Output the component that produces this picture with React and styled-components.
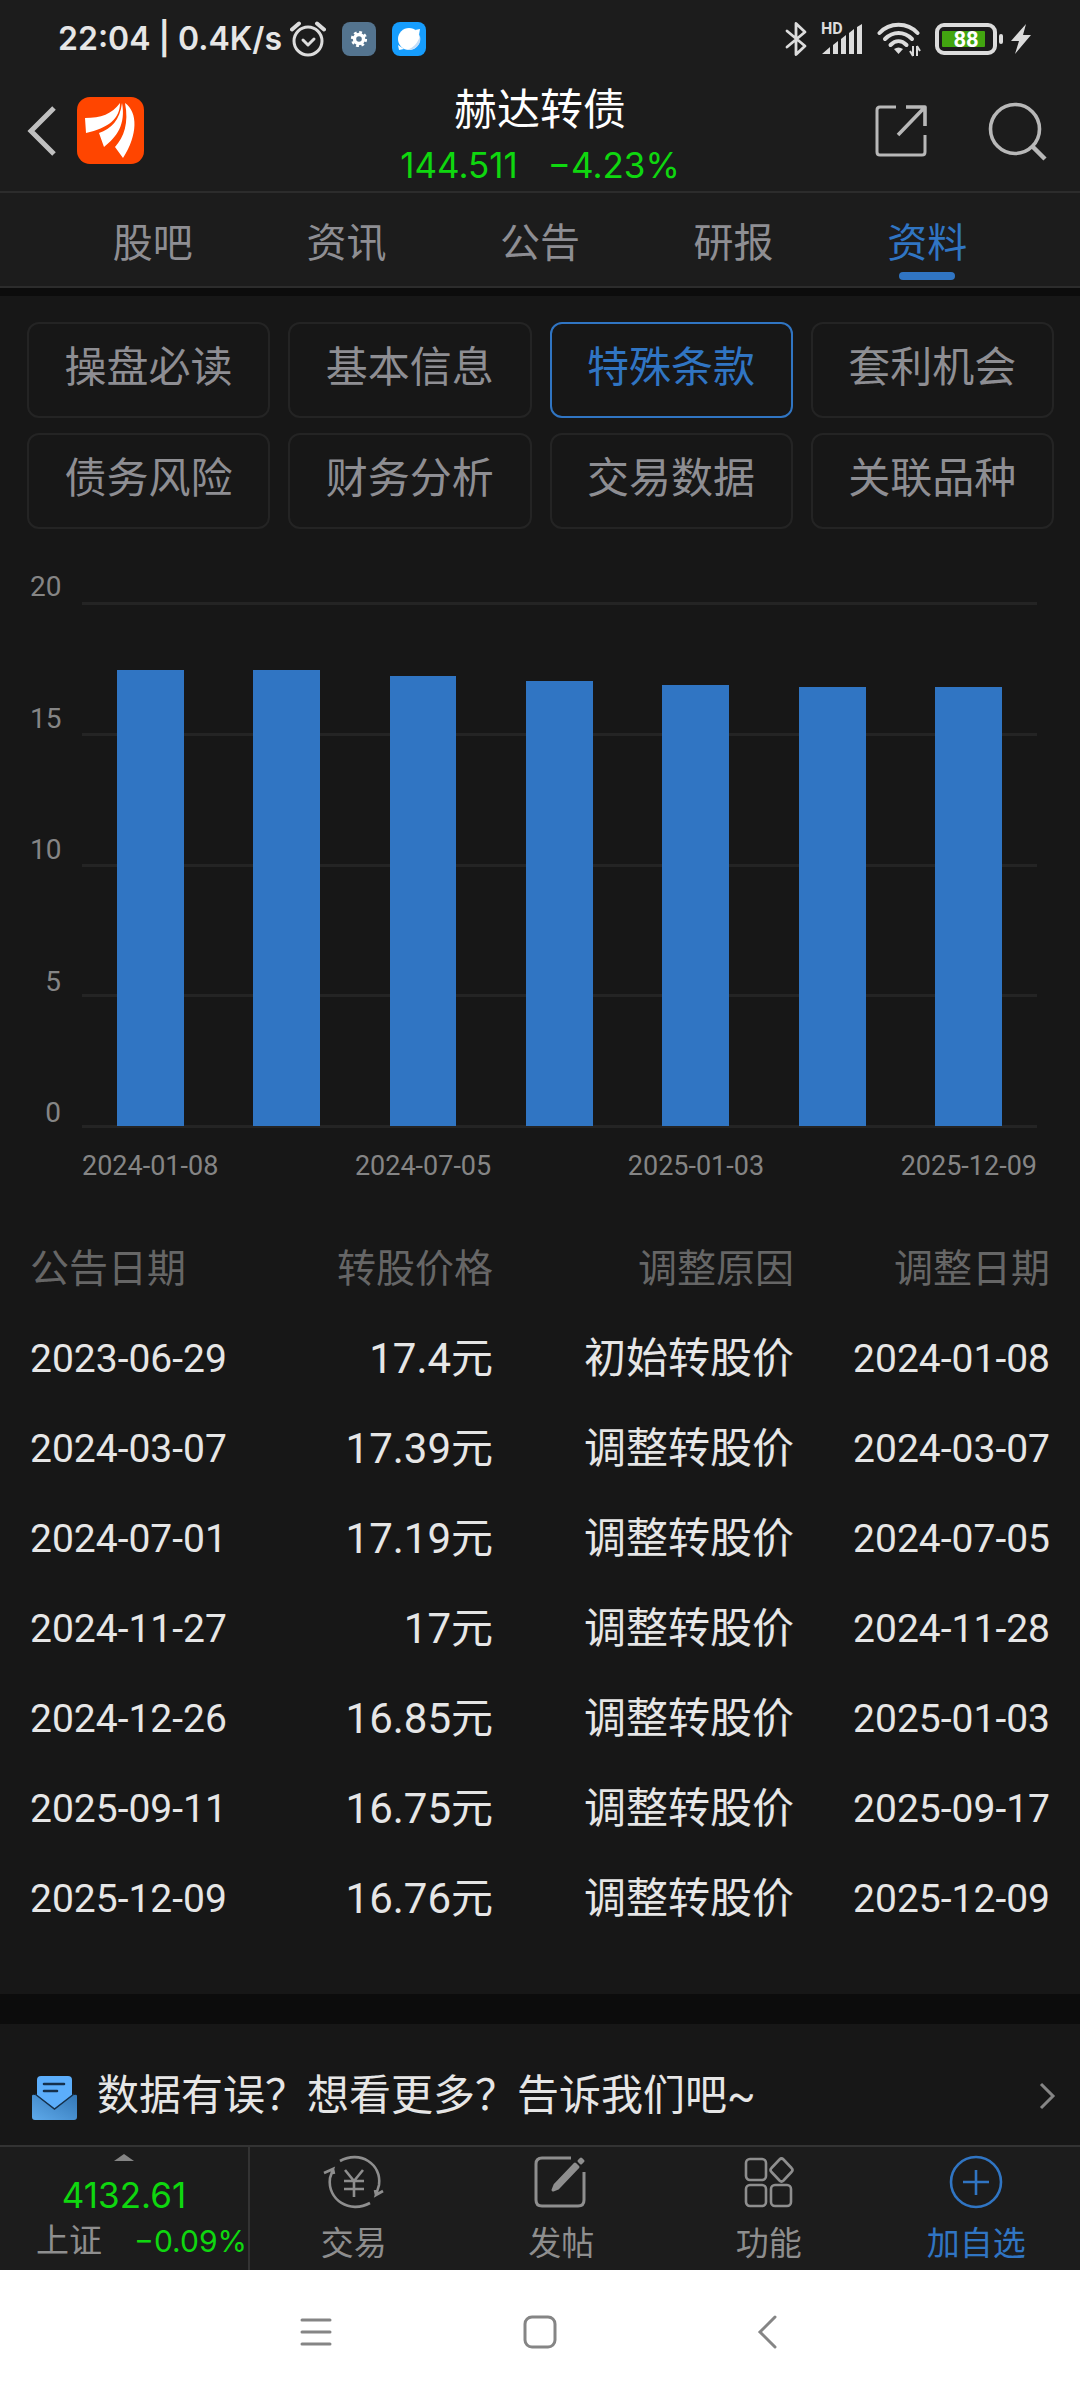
import React from "react";
import styled, { createGlobalStyle } from "styled-components";

const GlobalStyle = createGlobalStyle`
  * {
    box-sizing: border-box;
  }
  body {
    margin: 0;
    background: #171717;
    font-family: Roboto, "Noto Sans CJK SC", sans-serif;
  }
  button {
    margin: 0;
    padding: 0;
    border: 0;
    background: none;
    font-family: inherit;
    cursor: pointer;
  }
  svg {
    display: block;
    flex: none;
  }
`;

const BLUE = "#3075c3";
const GREEN = "#0fd70f";

const tabs = ["股吧", "资讯", "公告", "研报", "资料"];

const sections = [
  "操盘必读",
  "基本信息",
  "特殊条款",
  "套利机会",
  "债务风险",
  "财务分析",
  "交易数据",
  "关联品种"
];

const records = [
  { notice: "2023-06-29", price: 17.4, reason: "初始转股价", date: "2024-01-08" },
  { notice: "2024-03-07", price: 17.39, reason: "调整转股价", date: "2024-03-07" },
  { notice: "2024-07-01", price: 17.19, reason: "调整转股价", date: "2024-07-05" },
  { notice: "2024-11-27", price: 17, reason: "调整转股价", date: "2024-11-28" },
  { notice: "2024-12-26", price: 16.85, reason: "调整转股价", date: "2025-01-03" },
  { notice: "2025-09-11", price: 16.75, reason: "调整转股价", date: "2025-09-17" },
  { notice: "2025-12-09", price: 16.76, reason: "调整转股价", date: "2025-12-09" }
];

const ticks = [20, 15, 10, 5, 0];
const maxPrice = 20;

const StatusBar = styled.div`
  display: flex;
  align-items: center;
  justify-content: space-between;
  height: 78px;
  padding: 0 49px 0 58px;
  background: #1c1c1c;
  color: #e6e6e6;
`;
const StatusGroup = styled.div`
  display: flex;
  align-items: center;
  gap: ${props => props.$gap}px;
`;
const StatusText = styled.span`
  font-family: Inter, sans-serif;
  font-size: 32px;
  font-weight: 600;
  line-height: 40px;
  white-space: nowrap;
`;
const Header = styled.header`
  display: grid;
  grid-template-columns: 1fr auto 1fr;
  align-items: center;
  height: 115px;
  padding: 0 26px;
  border-bottom: 2px solid #2c2c2c;
  background: #1c1c1c;
`;
const HeaderSide = styled.div`
  display: flex;
  align-items: center;
  justify-content: ${props => (props.$end ? "flex-end" : "flex-start")};
  gap: ${props => (props.$end ? 60 : 20)}px;
  padding: ${props => (props.$end ? "0 7px 8px 0" : "0 0 8px")};
`;
const Quote = styled.div`
  text-align: center;
`;
const Title = styled.h1`
  margin: 0;
  color: #ffffff;
  font-size: 43px;
  font-weight: 400;
  line-height: 60px;
`;
const Price = styled.div`
  display: flex;
  justify-content: center;
  gap: 30px;
  color: ${GREEN};
  font-family: Inter, sans-serif;
  font-size: 35px;
  line-height: 50px;
`;
const Tabs = styled.nav`
  display: flex;
  height: 95px;
  padding: 0 56px;
  border-bottom: 2px solid #2c2c2c;
  background: #1c1c1c;
`;
const Tab = styled.button`
  flex: 1;
  display: flex;
  flex-direction: column;
  align-items: center;
  justify-content: flex-end;
  gap: 4px;
  padding-bottom: 6px;
  color: ${props => (props.$active ? BLUE : "#8e8e93")};
  font-size: 40px;
  line-height: 48px;
  &::after {
    content: "";
    width: 56px;
    height: 8px;
    border-radius: 4px;
    background: ${props => (props.$active ? BLUE : "transparent")};
  }
`;
const Divider = styled.div`
  height: ${props => props.$size}px;
  background: #0c0c0c;
`;
const SectionGrid = styled.div`
  display: grid;
  grid-template-columns: repeat(4, 1fr);
  gap: 15px 18px;
  padding: 26px 26px 0 27px;
`;
const SectionButton = styled.button`
  height: 96px;
  padding-bottom: 4px;
  border: 2px solid ${props => (props.$active ? BLUE : "#242424")};
  border-radius: 12px;
  color: ${props => (props.$active ? BLUE : "#8e8e93")};
  font-size: 42px;
  line-height: 60px;
`;
const Chart = styled.div`
  display: grid;
  grid-template-columns: 31px 1fr;
  column-gap: 21px;
  padding: 43px 43px 0 30px;
  color: #858585;
`;
const YAxis = styled.div`
  display: flex;
  flex-direction: column;
  justify-content: space-between;
  font-size: 28px;
  text-align: right;
  line-height: 30px;
`;
const Plot = styled.div`
  display: grid;
  height: 526px;
  margin-top: 30px;
`;
const GridLines = styled.div`
  grid-area: 1 / 1;
  display: flex;
  flex-direction: column;
  justify-content: space-between;
`;
const GridLine = styled.div`
  height: 3px;
  background: #242424;
`;
const Bars = styled.div`
  grid-area: 1 / 1;
  z-index: 1;
  display: flex;
  align-items: flex-end;
  justify-content: space-around;
  padding-bottom: 2px;
`;
const Bar = styled.div`
  width: 7%;
  background: ${BLUE};
`;
const XAxis = styled.div`
  grid-column: 2;
  display: flex;
  justify-content: space-between;
  margin-top: 22px;
  font-size: 27px;
  line-height: 32px;
`;
const TableWrap = styled.div`
  padding: 39px 30px 50px;
`;
const Table = styled.table`
  width: 100%;
  table-layout: fixed;
  border-collapse: collapse;
`;
const Th = styled.th`
  width: ${props => props.$width};
  height: 93px;
  padding: 0 0 6px;
  color: #666666;
  font-size: 39px;
  font-weight: 400;
  text-align: right;
  &:first-child {
    text-align: left;
  }
`;
const Td = styled.td`
  height: 90px;
  padding: 0;
  color: #e6e6e6;
  font-size: ${props => (props.$date ? 39 : 42)}px;
  line-height: 60px;
  text-align: right;
  white-space: nowrap;
  &:first-child {
    text-align: left;
  }
`;
const Feedback = styled.a`
  display: flex;
  align-items: center;
  height: 121px;
  padding: 22px 24px 0 32px;
  color: #e6e6e6;
  font-size: 42px;
  line-height: 60px;
  text-decoration: none;
`;
const FeedbackText = styled.span`
  flex: 1;
  margin-left: 20px;
`;
const BottomBar = styled.footer`
  display: flex;
  height: 125px;
  border-top: 2px solid #333333;
  background: #1c1c1c;
`;
const IndexPanel = styled.button`
  display: flex;
  flex-direction: column;
  align-items: center;
  width: 250px;
  padding-top: 7px;
  border-right: 2px solid #333333;
`;
const IndexValue = styled.span`
  margin-top: 10px;
  color: ${GREEN};
  font-family: Inter, sans-serif;
  font-size: 35px;
  line-height: 48px;
`;
const IndexRow = styled.span`
  align-self: stretch;
  display: flex;
  align-items: center;
  justify-content: space-between;
  padding: 0 1px 0 36px;
  color: #8e8e8e;
  font-size: 33px;
  line-height: 44px;
`;
const IndexChange = styled.span`
  color: ${GREEN};
  font-family: Inter, sans-serif;
  font-size: 30px;
`;
const Actions = styled.nav`
  flex: 1;
  display: flex;
`;
const Action = styled.button`
  flex: 1;
  display: flex;
  flex-direction: column;
  align-items: center;
  gap: 12px;
  padding-top: 7px;
  color: ${props => (props.$active ? BLUE : "#8e8e8e")};
  font-size: 33px;
  line-height: 44px;
`;
const SystemNav = styled.nav`
  display: flex;
  align-items: center;
  justify-content: center;
  gap: 190px;
  height: 130px;
  padding-bottom: 6px;
  background: #ffffff;
`;

const AlarmIcon = () => (
  <svg width="36" height="36" viewBox="0 0 36 36" fill="none" stroke="#dcdcdc" strokeWidth="3" strokeLinecap="round">
    <circle cx="18" cy="20" r="14" />
    <path d="M2 8.500l7-6M34 8.500l-7-6" strokeWidth="4" />
    <path d="M13 19l5 5 6-6" strokeLinejoin="round" />
  </svg>
);
const GearIcon = () => (
  <svg width="34" height="34" viewBox="0 0 34 34">
    <rect width="34" height="34" rx="8" fill="#54748f" />
    <circle cx="17" cy="17" r="4.500" fill="none" stroke="#fff" strokeWidth="3.400" />
    <circle cx="17" cy="17" r="6.800" fill="none" stroke="#fff" strokeWidth="2.600" strokeDasharray="2.800 2.540" />
  </svg>
);
const BrowserIcon = () => (
  <svg width="34" height="34" viewBox="0 0 34 34">
    <rect width="34" height="34" rx="8" fill="#169dfd" />
    <circle cx="17" cy="17" r="11" fill="#fff" />
    <path d="M23 8l5-1-1 6zM6 23l1 5 5-1z" fill="#fff" />
    <path d="M28 14c2 8-4 14-13 14 6-2 11-7 13-14z" fill="#c3ddf8" />
  </svg>
);
const BluetoothIcon = () => (
  <svg width="22" height="36" viewBox="0 0 22 36" fill="none" stroke="#dcdcdc" strokeWidth="2.800" strokeLinejoin="round" strokeLinecap="round">
    <path d="M2 10l18 15-9 8.500v-31L20 11 2 26" />
  </svg>
);
const SignalIcon = () => (
  <svg width="42" height="50" viewBox="0 -8 42 50" fill="#dcdcdc">
    <text x="0" y="12" fontFamily="Roboto, sans-serif" fontSize="16" fontWeight="700">
      HD
    </text>
    <path d="M1 32l8-7v7zM12 23l5-4v13h-5zM20 17l5-4v19h-5zM28 11l5-4v25h-5zM36 5l5-3v30h-5z" />
  </svg>
);
const WifiIcon = () => (
  <svg width="44" height="36" viewBox="0 0 44 36">
    <g fill="none" stroke="#dcdcdc" strokeWidth="4" strokeLinecap="round">
      <path d="M2.500 12c10-11 28-11 38 0" />
      <path d="M8 18c8-8 19-8 27 0" />
      <path d="M13.500 24c5-5 11-5 16 0" />
    </g>
    <path d="M17 28c3-2 6-2 9 0l-4.500 5z" fill="#dcdcdc" />
    <path d="M36 25v10M33 30l3 5M40 35V25M43 30l-3-5" stroke="#dcdcdc" strokeWidth="2" />
  </svg>
);
const BatteryIcon = () => (
  <svg width="68" height="32" viewBox="0 0 68 32">
    <rect x="2" y="2" width="58" height="28" rx="7" fill="none" stroke="#dcdcdc" strokeWidth="4" />
    <rect x="7" y="8" width="43" height="16" rx="1" fill="#42a510" />
    <rect x="64" y="11" width="4" height="10" rx="2" fill="#dcdcdc" />
    <text x="31" y="24" textAnchor="middle" fill="#fff" fontFamily="Roboto, sans-serif" fontSize="22" fontWeight="700">
      88
    </text>
  </svg>
);
const BoltIcon = () => (
  <svg width="20" height="30" viewBox="0 0 20 30" fill="#dcdcdc">
    <path d="M15 0L0 17h8L4 30l16-19h-8z" />
  </svg>
);
const BackIcon = () => (
  <svg width="31" height="54" viewBox="0 0 31 54" fill="none" stroke="#c0c0c0" strokeWidth="5">
    <path d="M28 4L5 27l23 23" />
  </svg>
);
const LogoIcon = () => (
  <svg width="67" height="67" viewBox="0 0 67 67">
    <rect width="67" height="67" rx="13" fill="#ff4500" />
    <g fill="#fff">
      <path d="M8 21c16 0 27-4 35-15 0 16-12 25-34 30z" />
      <path d="M45 6c4 21-5 34-18 44l-5-14c12-4 21-13 23-30z" />
      <path d="M48 6c13 9 13 32-2 55l-8-11c9-10 14-24 10-44z" />
    </g>
  </svg>
);
const ShareIcon = () => (
  <svg width="54" height="54" viewBox="0 0 54 54" fill="none" stroke="#b8b8b8" strokeWidth="3" strokeLinejoin="round">
    <path d="M22 3H6q-3 0-3 3v42q0 3 3 3h42q3 0 3-3V31" />
    <path d="M32 3h19v19M51 3L24 31" strokeWidth="3.600" />
  </svg>
);
const SearchIcon = () => (
  <svg width="59" height="60" viewBox="0 0 59 60" fill="none" stroke="#b8b8b8" strokeWidth="3.600">
    <circle cx="27" cy="28" r="24.500" />
    <path d="M44 45l13 13" strokeWidth="4.500" />
  </svg>
);
const MailIcon = () => (
  <svg width="45" height="48" viewBox="0 -4 45 48">
    <defs>
      <linearGradient id="mail" x1="0" y1="1" x2="1" y2="0">
        <stop offset="0" stopColor="#5ea9ea" />
        <stop offset="1" stopColor="#3377b6" />
      </linearGradient>
    </defs>
    <path d="M0 20q0-2 3-1h39q3-1 3 1v21q0 3-3 3H3q-3 0-3-3z" fill="url(#mail)" />
    <path d="M5 4q0-4 4-4h27q4 0 4 4v15L22.500 33 5 19z" fill="#5caefb" />
    <path d="M3 18l19.500 15L42 18" fill="none" stroke="#15304b" strokeWidth="1.500" />
    <path d="M12 8h20M12 15h13" stroke="#15304b" strokeWidth="2.600" strokeLinecap="round" />
  </svg>
);
const ChevronIcon = () => (
  <svg width="17" height="28" viewBox="0 0 17 28" fill="none" stroke="#858585" strokeWidth="3">
    <path d="M2 2l12 12L2 26" />
  </svg>
);
const ArrowUpIcon = () => (
  <svg width="20" height="7" viewBox="0 0 20 7" fill="#858585">
    <path d="M10 0l10 7H0z" />
  </svg>
);
const TradeIcon = () => (
  <svg width="62" height="56" viewBox="0 0 62 56" fill="none" stroke="currentColor" strokeWidth="2.600">
    <path d="M17 7C37-4 59 10 56 31l-3 10 7-4M53 41l-1-5" />
    <path d="M47 49C27 60 4 46 7 24l3-9-9 4M10 15l1 5" />
    <path d="M22 16l9 11 9-11M21 27h20M21 35h20M31 27v16" />
  </svg>
);
const PostIcon = () => (
  <svg width="54" height="56" viewBox="0 0 54 56" fill="none" stroke="currentColor" strokeWidth="3">
    <path d="M37 4H8q-6 0-6 6v36q0 6 6 6h36q6 0 6-6V18" />
    <path d="M19 36l2-5 20-21 3 3-20 21zM45 7l2-2 2 2-2 2z" fill="currentColor" strokeLinejoin="round" />
  </svg>
);
const AppsIcon = () => (
  <svg width="50" height="56" viewBox="0 0 50 56" fill="none" stroke="currentColor" strokeWidth="2.600">
    <rect x="2" y="5" width="20" height="21" rx="4" />
    <rect x="2" y="31" width="20" height="21" rx="4" />
    <rect x="27" y="31" width="20" height="21" rx="4" />
    <path d="M35.500 5.500q2-2 4 0l8 8.500q2 2 0 4l-8 8.500q-2 2-4 0l-8-8.500q-2-2 0-4z" />
  </svg>
);
const AddIcon = () => (
  <svg width="54" height="56" viewBox="0 0 54 56" fill="none" stroke="currentColor" strokeWidth="2.600">
    <circle cx="27" cy="28" r="25" />
    <path d="M27 16v25M14 28h26" />
  </svg>
);
const MenuIcon = () => (
  <svg width="34" height="34" viewBox="0 0 34 34" stroke="#858585" strokeWidth="3" strokeLinecap="round">
    <path d="M3 5h28M3 17h28M3 29h28" />
  </svg>
);
const HomeIcon = () => (
  <svg width="34" height="34" viewBox="0 0 34 34" fill="none" stroke="#858585" strokeWidth="3">
    <rect x="2" y="2" width="30" height="30" rx="7" />
  </svg>
);
const SystemBackIcon = () => (
  <svg width="34" height="34" viewBox="0 0 34 34" fill="none" stroke="#858585" strokeWidth="3" strokeLinecap="round">
    <path d="M28 2L13 17l15 15" />
  </svg>
);

const actions = [
  { label: "交易", icon: <TradeIcon /> },
  { label: "发帖", icon: <PostIcon /> },
  { label: "功能", icon: <AppsIcon /> },
  { label: "加自选", icon: <AddIcon />, active: true }
];

class App extends React.Component {
  constructor(props) {
    super(props);
    this.state = {
      tab: "资料",
      section: "特殊条款"
    };
  }
  renderChart() {
    return (
      <Chart>
        <YAxis>
          {ticks.map(tick => (
            <span key={tick}>{tick}</span>
          ))}
        </YAxis>
        <Plot>
          <GridLines>
            {ticks.map(tick => (
              <GridLine key={tick} />
            ))}
          </GridLines>
          <Bars>
            {records.map(record => (
              <Bar
                key={record.date}
                style={{ height: (record.price / maxPrice) * 100 + "%" }}
              />
            ))}
          </Bars>
        </Plot>
        <XAxis>
          {records
            .filter((record, index) => index % 2 === 0)
            .map(record => (
              <span key={record.date}>{record.date}</span>
            ))}
        </XAxis>
      </Chart>
    );
  }
  renderTable() {
    return (
      <TableWrap>
        <Table>
          <thead>
            <tr>
              <Th $width="22%" scope="col">
                公告日期
              </Th>
              <Th $width="23.4%" scope="col">
                转股价格
              </Th>
              <Th $width="29.5%" scope="col">
                调整原因
              </Th>
              <Th $width="25.1%" scope="col">
                调整日期
              </Th>
            </tr>
          </thead>
          <tbody>
            {records.map(record => (
              <tr key={record.notice}>
                <Td $date>{record.notice}</Td>
                <Td>{record.price + "元"}</Td>
                <Td>{record.reason}</Td>
                <Td $date>{record.date}</Td>
              </tr>
            ))}
          </tbody>
        </Table>
      </TableWrap>
    );
  }
  render() {
    const { tab, section } = this.state;
    return (
      <div>
        <GlobalStyle />
        <StatusBar>
          <StatusGroup $gap={16}>
            <StatusGroup $gap={8}>
              <StatusText>22:04 | 0.4K/s</StatusText>
              <AlarmIcon />
            </StatusGroup>
            <GearIcon />
            <BrowserIcon />
          </StatusGroup>
          <StatusGroup $gap={14}>
            <BluetoothIcon />
            <SignalIcon />
            <WifiIcon />
            <StatusGroup $gap={8}>
              <BatteryIcon />
              <BoltIcon />
            </StatusGroup>
          </StatusGroup>
        </StatusBar>
        <Header>
          <HeaderSide>
            <button type="button" aria-label="返回">
              <BackIcon />
            </button>
            <LogoIcon />
          </HeaderSide>
          <Quote>
            <Title>赫达转债</Title>
            <Price>
              <span>144.511</span>
              <span>−4.23%</span>
            </Price>
          </Quote>
          <HeaderSide $end>
            <button type="button" aria-label="分享">
              <ShareIcon />
            </button>
            <button type="button" aria-label="搜索">
              <SearchIcon />
            </button>
          </HeaderSide>
        </Header>
        <Tabs>
          {tabs.map(name => (
            <Tab
              key={name}
              type="button"
              $active={name === tab}
              onClick={() => this.setState({ tab: name })}
            >
              {name}
            </Tab>
          ))}
        </Tabs>
        <Divider $size={8} />
        <SectionGrid>
          {sections.map(name => (
            <SectionButton
              key={name}
              type="button"
              $active={name === section}
              onClick={() => this.setState({ section: name })}
            >
              {name}
            </SectionButton>
          ))}
        </SectionGrid>
        {this.renderChart()}
        {this.renderTable()}
        <Divider $size={30} />
        <Feedback href="#feedback">
          <MailIcon />
          <FeedbackText>数据有误？想看更多？告诉我们吧~</FeedbackText>
          <ChevronIcon />
        </Feedback>
        <BottomBar>
          <IndexPanel type="button">
            <ArrowUpIcon />
            <IndexValue>4132.61</IndexValue>
            <IndexRow>
              <span>上证</span>
              <IndexChange>−0.09%</IndexChange>
            </IndexRow>
          </IndexPanel>
          <Actions>
            {actions.map(action => (
              <Action key={action.label} type="button" $active={action.active}>
                {action.icon}
                {action.label}
              </Action>
            ))}
          </Actions>
        </BottomBar>
        <SystemNav>
          <button type="button" aria-label="菜单">
            <MenuIcon />
          </button>
          <button type="button" aria-label="主页">
            <HomeIcon />
          </button>
          <button type="button" aria-label="后退">
            <SystemBackIcon />
          </button>
        </SystemNav>
      </div>
    );
  }
}

export default App;
